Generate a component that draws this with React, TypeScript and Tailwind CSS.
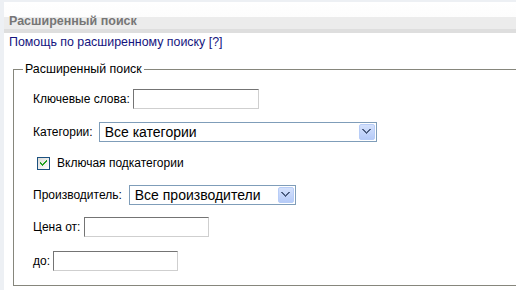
import React from 'react';

const font = { fontFamily: '"Liberation Sans", Arial, sans-serif' };

function TextInput({ width }: { width: string }) {
  return (
    <div
      className={`${width} h-[20px] bg-white border border-t-[#747474] border-l-[#747474] border-b-[#cfcfcf] border-r-[#cfcfcf]`}
    />
  );
}

function Chevron() {
  return (
    <svg width="9" height="6" viewBox="0 0 9 6" shapeRendering="crispEdges">
      <path
        d="M0 0h2v1h1v1h1v1h1V2h1V1h1V0h2v1H8v1H7v1H6v1H5v1H4V4H3V3H2V2H1V1H0z"
        fill="#4d5e80"
      />
    </svg>
  );
}

function Select({ value, width }: { value: string; width: string }) {
  return (
    <div className={`${width} h-[20px] flex items-center bg-white border border-[#7f9db9] pl-[5px] pr-[1px]`}>
      <span className="flex-1 text-[14px] leading-[18px] text-black">{value}</span>
      <div className="w-[16px] h-[16px] flex items-center justify-center rounded-[2px] border border-[#b8cdf7] bg-[linear-gradient(to_bottom,#d4e1fc,#b6cbf8)]">
        <Chevron />
      </div>
    </div>
  );
}

function Checkbox() {
  return (
    <div className="w-[13px] h-[13px] border border-[#1c5180] bg-[linear-gradient(135deg,#dcdcd7,#fff)] flex items-center justify-center">
      <svg width="7" height="7" viewBox="0 0 7 7" shapeRendering="crispEdges">
        <path d="M6 0h1v2H6v1H5v1H4v1H3v1H2V5H1V4H0V2h1v1h1v1h1V3h1V2h1V1h1z" fill="#21a121" />
      </svg>
    </div>
  );
}

export default function App() {
  return (
    <div className="w-[516px] h-[290px] overflow-hidden bg-[#edf0f4] pt-[2px] pl-[4px]" style={font}>
      <div className="bg-white h-full">
        <div className="h-[31px] pl-[5px] pt-[6px] bg-[linear-gradient(to_bottom,#ffffff_0px,#fdfdfd_15px,#ececec_15px,#ececec_27px,#dedede_27px)]">
          <span className="text-[12.5px] leading-[15px] font-bold text-[#767676]">Расширенный поиск</span>
        </div>
        <div className="pl-[5px] mt-[2px] text-[12.4px] leading-[15px] text-[#14147e]">
          Помощь по расширенному поиску [?]
        </div>
        <fieldset className="ml-[9px] mt-[12px] w-[530px] border border-[#86867c] pl-[9px] pb-[14px]">
          <legend className="px-[2px] text-[12.4px] leading-[15px] text-black">Расширенный поиск</legend>
          <div className="pl-[10px] text-[12px] leading-[15px] text-black">
            <div className="mt-[12px] flex items-center gap-[3px]">
              <span>Ключевые слова:</span>
              <TextInput width="w-[126px]" />
            </div>
            <div className="mt-[13px] flex items-center gap-[6px]">
              <span>Категории:</span>
              <Select value="Все категории" width="w-[278px]" />
            </div>
            <div className="mt-[15px] h-[13px] flex items-center gap-[7px] pl-[4px]">
              <Checkbox />
              <span>Включая подкатегории</span>
            </div>
            <div className="mt-[15px] flex items-center gap-[7px]">
              <span>Производитель:</span>
              <Select value="Все производители" width="w-[167px]" />
            </div>
            <div className="mt-[12px] flex items-center gap-[4px]">
              <span>Цена от:</span>
              <TextInput width="w-[125px]" />
            </div>
            <div className="mt-[14px] flex items-center gap-[3px]">
              <span>до:</span>
              <TextInput width="w-[125px]" />
            </div>
          </div>
        </fieldset>
      </div>
    </div>
  );
}
